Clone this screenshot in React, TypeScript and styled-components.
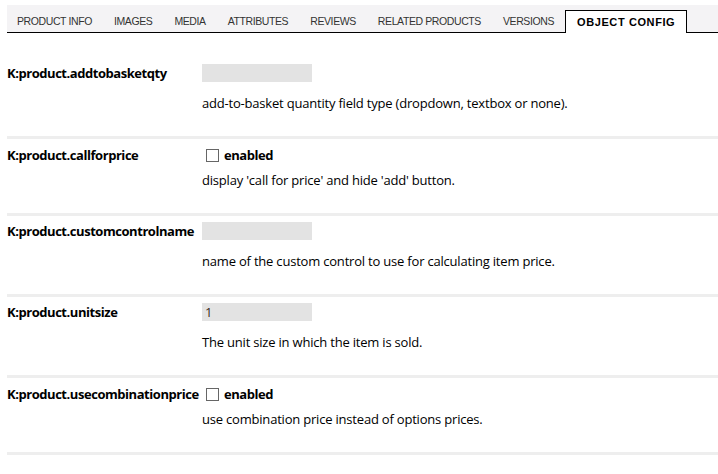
import React from 'react';
import styled, { createGlobalStyle } from 'styled-components';

const GlobalStyle = createGlobalStyle`
  html, body {
    margin: 0;
    padding: 0;
    background: #fff;
  }
  body {
    font-family: "Open Sans", "Noto Sans", sans-serif;
    color: #000;
  }
`;

interface IConfigRow {
  name: string
  kind: 'text' | 'check'
  value?: string
  description: string
}

const rows: IConfigRow[] = [
  { name: 'K:product.addtobasketqty', kind: 'text', description: 'add-to-basket quantity field type (dropdown, textbox or none).' },
  { name: 'K:product.callforprice', kind: 'check', description: "display 'call for price' and hide 'add' button." },
  { name: 'K:product.customcontrolname', kind: 'text', description: 'name of the custom control to use for calculating item price.' },
  { name: 'K:product.unitsize', kind: 'text', value: '1', description: 'The unit size in which the item is sold.' },
  { name: 'K:product.usecombinationprice', kind: 'check', description: 'use combination price instead of options prices.' }
];

const tabs = ['Product Info', 'Images', 'Media', 'Attributes', 'Reviews', 'Related Products', 'Versions', 'Object Config'];

const Page = styled.div`
  padding: 5px 0 0 7px;
`;

const TabBar = styled.div`
  display: flex;
  align-items: flex-end;
  height: 27px;
  background: #f4f3f5;
  border-bottom: 1px solid #000;
`;

const Tab = styled.div<{ $active?: boolean }>`
  display: flex;
  align-items: center;
  flex-shrink: 0;
  white-space: nowrap;
  height: ${p => (p.$active ? '23px' : '27px')};
  padding: ${p => (p.$active ? '0' : '4px')} 11px 0;
  margin-bottom: ${p => (p.$active ? '-1px' : '0')};
  font-family: "Liberation Sans", Arial, sans-serif;
  font-size: ${p => (p.$active ? '11px' : '10.5px')};
  text-transform: uppercase;
  letter-spacing: ${p => (p.$active ? '0.6px' : '-0.4px')};
  font-weight: ${p => (p.$active ? 700 : 400)};
  color: ${p => (p.$active ? '#000' : '#333')};
  background: ${p => (p.$active ? '#fff' : 'transparent')};
  border: ${p => (p.$active ? '1px solid #000' : 'none')};
  border-bottom: none;
  box-sizing: border-box;
  &:first-child {
    padding-left: 10px;
  }
`;

const Rows = styled.div`
  padding-top: 25px;
`;

const Section = styled.div<{ $kind: 'text' | 'check' }>`
  display: grid;
  grid-template-columns: 195px 1fr;
  padding: ${p => (p.$kind === 'check' ? '7px' : '6px')} 0 24px;
  border-bottom: 3px solid #eeeeee;
`;

const Label = styled.div`
  display: flex;
  align-items: center;
  height: 18px;
  font-size: 13px;
  font-weight: 700;
  white-space: nowrap;
  letter-spacing: -0.45px;
`;

const Control = styled.div`
  display: flex;
  align-items: center;
  height: 18px;
`;

const TextBox = styled.div`
  width: 110px;
  height: 18px;
  box-sizing: border-box;
  padding: 0 3px;
  background: #e3e3e3;
  font-size: 13px;
  line-height: 18px;
  color: #3a2a1a;
`;

const Check = styled.span`
  flex-shrink: 0;
  width: 13px;
  height: 13px;
  box-sizing: border-box;
  margin: 0 5px 0 4px;
  border: 1px solid #666;
  background: #fff;
`;

const CheckText = styled.span`
  font-size: 13px;
  font-weight: 700;
  letter-spacing: -0.45px;
`;

const Description = styled.div<{ $kind: 'text' | 'check' }>`
  grid-column: 2;
  margin-top: ${p => (p.$kind === 'check' ? '7px' : '12px')};
  font-size: 13px;
  line-height: 18px;
  letter-spacing: -0.2px;
  white-space: nowrap;
`;

const App = () => {
  return (
    <Page>
      <GlobalStyle />
      <TabBar>
        {tabs.map(t => (
          <Tab key={t} $active={t === 'Object Config'}>
            {t}
          </Tab>
        ))}
      </TabBar>
      <Rows>
        {rows.map(r => (
          <Section key={r.name} $kind={r.kind}>
            <Label>{r.name}</Label>
            <Control>
              {r.kind === 'text' ? (
                <TextBox>{r.value}</TextBox>
              ) : (
                <>
                  <Check />
                  <CheckText>enabled</CheckText>
                </>
              )}
            </Control>
            <Description $kind={r.kind}>{r.description}</Description>
          </Section>
        ))}
      </Rows>
    </Page>
  );
};

export default App;
